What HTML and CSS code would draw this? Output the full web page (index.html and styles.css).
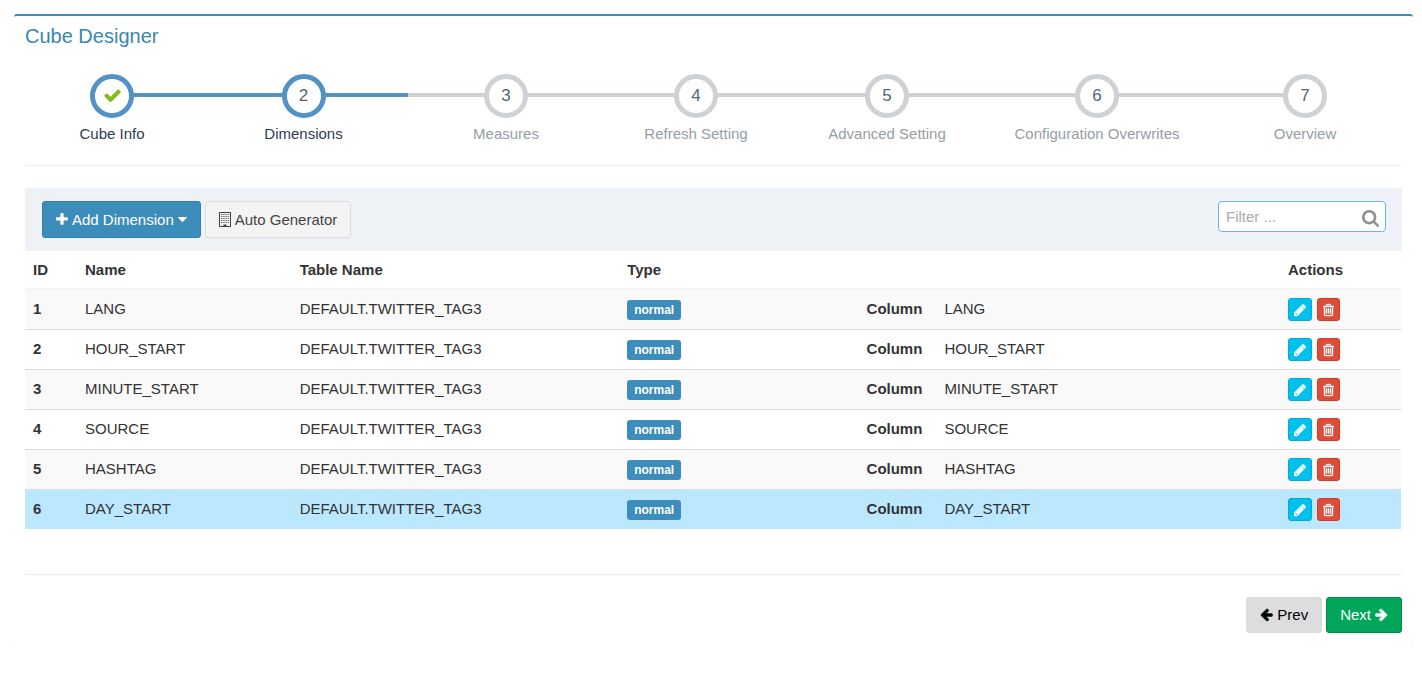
FILE: index.html
```
<!DOCTYPE html>
<html lang="en">
<head>
<meta charset="utf-8">
<title>Cube Designer</title>
<link rel="stylesheet" href="styles.css">
</head>
<body>
<svg class="sprite" aria-hidden="true">
  <symbol id="plus" viewBox="192 0 1408 1792"><path d="M1600 736v192q0 40-28 68t-68 28h-416v416q0 40-28 68t-68 28h-192q-40 0-68-28t-28-68v-416h-416q-40 0-68-28t-28-68v-192q0-40 28-68t68-28h416v-416q0-40 28-68t68-28h192q40 0 68 28t28 68v416h416q40 0 68 28t28 68z"/></symbol>
  <symbol id="caret" viewBox="448 640 896 512"><path d="M1344 704q0 26-19 45l-384 384q-19 19-45 19t-45-19l-384-384q-19-19-19-45t19-45 45-19h768q26 0 45 19t19 45z"/></symbol>
  <symbol id="check" viewBox="0 0 1792 1792"><path d="M1671 566q0 40-28 68l-724 724-136 136q-28 28-68 28t-68-28l-136-136-362-362q-28-28-28-68t28-68l136-136q28-28 68-28t68 28l294 295 656-657q28-28 68-28t68 28l136 136q28 28 28 68z"/></symbol>
  <symbol id="search" viewBox="64 128 1664 1664"><path d="M1216 832q0-185-131.5-316.5t-316.5-131.5-316.5 131.5-131.5 316.5 131.5 316.5 316.5 131.5 316.5-131.5 131.5-316.5zm512 832q0 52-38 90t-90 38q-54 0-90-38l-343-342q-179 124-399 124-143 0-273.5-55.5t-225-150-150-225-55.5-273.5 55.5-273.5 150-225 225-150 273.5-55.5 273.5 55.5 225 150 150 225 55.5 273.5q0 220-124 399l343 343q37 37 37 90z"/></symbol>
  <symbol id="pencil" viewBox="128 0 1536 1792"><path d="M491 1536l91-91-235-235-91 91v107h128v128h107zm523-928q0-22-22-22-10 0-17 7l-542 542q-7 7-7 17 0 22 22 22 10 0 17-7l542-542q7-7 7-17zm-54-192l416 416-832 832h-416v-416zm683 96q0 53-37 90l-166 166-416-416 166-165q36-38 90-38 53 0 91 38l235 234q37 39 37 91z"/></symbol>
  <symbol id="trash" viewBox="192 0 1408 1792"><path d="M704 736v576q0 14-9 23t-23 9h-64q-14 0-23-9t-9-23v-576q0-14 9-23t23-9h64q14 0 23 9t9 23zm256 0v576q0 14-9 23t-23 9h-64q-14 0-23-9t-9-23v-576q0-14 9-23t23-9h64q14 0 23 9t9 23zm256 0v576q0 14-9 23t-23 9h-64q-14 0-23-9t-9-23v-576q0-14 9-23t23-9h64q14 0 23 9t9 23zm128 724v-948h-896v948q0 22 7 40.500t14.500 27 10.500 8.500h832q3 0 10.500-8.500t14.500-27 7-40.500zm-672-1076h448l-48-117q-7-9-17-11h-317q-10 2-17 11zm928 32v64q0 14-9 23t-23 9h-96v948q0 83-47 143.500t-113 60.500h-832q-66 0-113-58.500t-47-141.500v-952h-96q-14 0-23-9t-9-23v-64q0-14 9-23t23-9h309l70-167q15-37 54-63t79-26h320q40 0 79 26t54 63l70 167h309q14 0 23 9t9 23z"/></symbol>
  <symbol id="arrow-left" viewBox="64 0 1664 1792"><path d="M1664 896v128q0 53-32.500 90.500t-84.500 37.500h-704l293 294q38 36 38 90t-38 90l-75 76q-37 37-90 37-52 0-91-37l-651-652q-37-37-37-90 0-52 37-91l651-650q38-38 91-38 52 0 90 38l75 74q38 38 38 91t-38 91l-293 293h704q52 0 84.500 37.500t32.500 90.500z"/></symbol>
  <symbol id="building" viewBox="0 0 12 15"><path fill-rule="evenodd" d="M.5 0h11q.5 0 .5.500v14q0 .5-.5.500h-11q-.5 0-.5-.5v-14q0-.5.5-.5zM1 1v13h3.500v-1.500h3v1.500h3.500v-13z"/><path opacity=".75" d="M2 2h1.500v1h-1.500zm2.200 0h1.500v1h-1.500zm2.200 0h1.500v1h-1.500zm2.200 0h1.500v1h-1.500zM2 4h1.500v1h-1.500zm2.200 0h1.500v1h-1.500zm2.200 0h1.500v1h-1.500zm2.200 0h1.500v1h-1.500zM2 6h1.500v1h-1.500zm2.200 0h1.500v1h-1.500zm2.200 0h1.500v1h-1.500zm2.200 0h1.500v1h-1.500zM2 8h1.500v1h-1.500zm2.200 0h1.500v1h-1.500zm2.200 0h1.500v1h-1.500zm2.200 0h1.500v1h-1.500zM2 10h1.500v1h-1.500zm2.200 0h1.500v1h-1.500zm2.200 0h1.500v1h-1.500zm2.200 0h1.500v1h-1.500z"/></symbol>
</svg>

<main class="box">
  <h1 class="box-title">Cube Designer</h1>

  <ol class="steps">
    <li class="step done"><span class="step-dot"><svg class="icon-check"><use href="#check"/></svg></span><span class="step-label">Cube Info</span></li>
    <li class="step active"><span class="step-dot">2</span><span class="step-label">Dimensions</span></li>
    <li class="step"><span class="step-dot">3</span><span class="step-label">Measures</span></li>
    <li class="step"><span class="step-dot">4</span><span class="step-label">Refresh Setting</span></li>
    <li class="step"><span class="step-dot">5</span><span class="step-label">Advanced Setting</span></li>
    <li class="step"><span class="step-dot">6</span><span class="step-label">Configuration Overwrites</span></li>
    <li class="step"><span class="step-dot">7</span><span class="step-label">Overview</span></li>
  </ol>

  <div class="toolbar">
    <button type="button" class="btn btn-primary"><svg class="icon"><use href="#plus"/></svg>Add Dimension<svg class="icon-caret"><use href="#caret"/></svg></button>
    <button type="button" class="btn btn-default"><svg class="icon"><use href="#building"/></svg>Auto Generator</button>
    <label class="filter"><input type="text" class="filter-input" placeholder="Filter ..." aria-label="Filter"><svg class="icon-search"><use href="#search"/></svg></label>
  </div>

  <table class="dimensions">
    <colgroup><col class="col-id"><col class="col-name"><col class="col-table"><col class="col-type"><col><col class="col-actions"></colgroup>
    <thead>
      <tr><th scope="col">ID</th><th scope="col">Name</th><th scope="col">Table Name</th><th scope="col">Type</th><td></td><th scope="col">Actions</th></tr>
    </thead>
    <tbody>
      <tr><th scope="row">1</th><td>LANG</td><td>DEFAULT.TWITTER_TAG3</td><td><span class="badge">normal</span></td><td><dl class="detail"><dt>Column</dt><dd>LANG</dd></dl></td><td><div class="actions"><button type="button" class="mini edit" aria-label="Edit LANG"><svg><use href="#pencil"/></svg></button><button type="button" class="mini delete" aria-label="Delete LANG"><svg><use href="#trash"/></svg></button></div></td></tr>
      <tr><th scope="row">2</th><td>HOUR_START</td><td>DEFAULT.TWITTER_TAG3</td><td><span class="badge">normal</span></td><td><dl class="detail"><dt>Column</dt><dd>HOUR_START</dd></dl></td><td><div class="actions"><button type="button" class="mini edit" aria-label="Edit HOUR_START"><svg><use href="#pencil"/></svg></button><button type="button" class="mini delete" aria-label="Delete HOUR_START"><svg><use href="#trash"/></svg></button></div></td></tr>
      <tr><th scope="row">3</th><td>MINUTE_START</td><td>DEFAULT.TWITTER_TAG3</td><td><span class="badge">normal</span></td><td><dl class="detail"><dt>Column</dt><dd>MINUTE_START</dd></dl></td><td><div class="actions"><button type="button" class="mini edit" aria-label="Edit MINUTE_START"><svg><use href="#pencil"/></svg></button><button type="button" class="mini delete" aria-label="Delete MINUTE_START"><svg><use href="#trash"/></svg></button></div></td></tr>
      <tr><th scope="row">4</th><td>SOURCE</td><td>DEFAULT.TWITTER_TAG3</td><td><span class="badge">normal</span></td><td><dl class="detail"><dt>Column</dt><dd>SOURCE</dd></dl></td><td><div class="actions"><button type="button" class="mini edit" aria-label="Edit SOURCE"><svg><use href="#pencil"/></svg></button><button type="button" class="mini delete" aria-label="Delete SOURCE"><svg><use href="#trash"/></svg></button></div></td></tr>
      <tr><th scope="row">5</th><td>HASHTAG</td><td>DEFAULT.TWITTER_TAG3</td><td><span class="badge">normal</span></td><td><dl class="detail"><dt>Column</dt><dd>HASHTAG</dd></dl></td><td><div class="actions"><button type="button" class="mini edit" aria-label="Edit HASHTAG"><svg><use href="#pencil"/></svg></button><button type="button" class="mini delete" aria-label="Delete HASHTAG"><svg><use href="#trash"/></svg></button></div></td></tr>
      <tr class="selected"><th scope="row">6</th><td>DAY_START</td><td>DEFAULT.TWITTER_TAG3</td><td><span class="badge">normal</span></td><td><dl class="detail"><dt>Column</dt><dd>DAY_START</dd></dl></td><td><div class="actions"><button type="button" class="mini edit" aria-label="Edit DAY_START"><svg><use href="#pencil"/></svg></button><button type="button" class="mini delete" aria-label="Delete DAY_START"><svg><use href="#trash"/></svg></button></div></td></tr>
    </tbody>
  </table>

  <div class="wizard-nav">
    <button type="button" class="btn btn-prev"><svg class="icon-arrow"><use href="#arrow-left"/></svg>Prev</button>
    <button type="button" class="btn btn-next">Next<svg class="icon-arrow flip"><use href="#arrow-left"/></svg></button>
  </div>
</main>
</body>
</html>
```
FILE: styles.css
```
* { box-sizing: border-box; }

body {
  margin: 14px 9px 14px 14px;
  background: #fff;
  color: #333;
  font: 15px/21px "Liberation Sans", Arial, sans-serif;
}

button, input { font: inherit; }
svg { fill: currentColor; }
.sprite { position: absolute; width: 0; height: 0; }

.box {
  padding: 8px 11px 11px;
  border-top: 2px solid #3c8dbc;
  border-radius: 3px;
  background: #fff;
  box-shadow: 0 1px 1px rgba(0, 0, 0, .12);
}

.box-title {
  margin: 0;
  color: #3a87ad;
  font-size: 20px;
  font-weight: 400;
  line-height: 24px;
}

/* Wizard steps */
.steps {
  display: grid;
  grid-template-columns: 174fr 209fr 196fr 184fr 198fr 222fr 194fr;
  margin: 0 0 22px;
  padding: 26px 0 21px;
  border-bottom: 1px solid #eee;
  list-style: none;
}

.step {
  position: relative;
  display: flex;
  flex-direction: column;
  align-items: center;
  gap: 5px;
  color: #949ea7;
  white-space: nowrap;
}

.step::before {
  content: "";
  position: absolute;
  top: 19px;
  left: 0;
  width: 100%;
  height: 4px;
  background: #ced1d6;
}

.step:first-child::before { left: 50%; width: 50%; }
.step:last-child::before { width: 50%; }
.step.done::before, .step.active::before { background: #5293c4; }
.step.done, .step.active { color: #2b3d53; }

.step-dot {
  position: relative;
  display: flex;
  align-items: center;
  justify-content: center;
  width: 44px;
  height: 44px;
  padding-bottom: 2px;
  border: 5px solid #ced1d6;
  border-radius: 50%;
  background: #fff;
  color: #546474;
  font-size: 17px;
}

.step.done .step-dot, .step.active .step-dot { border-color: #5293c4; }
.icon-check { width: 19px; height: 19px; color: #87ba21; }

/* Toolbar */
.toolbar {
  display: flex;
  align-items: flex-start;
  gap: 4px;
  padding: 13px 16px 13px 17px;
  background: #eef1f6;
}

.btn {
  display: inline-flex;
  align-items: center;
  gap: 4px;
  padding: 7px 13px;
  border: 1px solid transparent;
  border-radius: 3px;
}

.toolbar .btn { height: 37px; }
.btn-primary { background: #3c8dbc; border-color: #367fa9; color: #fff; }
.btn-default { background: #f4f4f4; border-color: #ddd; color: #444; }
.icon { width: 12px; height: 15px; }
.icon-caret { width: 9px; height: 5px; }

.filter {
  display: flex;
  align-items: center;
  width: 168px;
  height: 31px;
  margin-left: auto;
  padding: 0 6px 0 7px;
  border: 1px solid #6fb3e0;
  border-radius: 4px;
  background: #fff;
}

.filter-input {
  flex: 1;
  min-width: 0;
  padding: 0;
  border: 0;
  outline: 0;
  background: none;
}

.filter-input::placeholder { color: #aaa; opacity: 1; }
.icon-search { width: 17px; height: 17px; margin-top: 3px; color: #909090; }

/* Dimension table */
.dimensions {
  width: calc(100% - 1px);
  table-layout: fixed;
  border-collapse: separate;
  border-spacing: 0;
}

.col-id { width: 52px; }
.col-name { width: 15.6%; }
.col-table { width: 23.8%; }
.col-type { width: 17.4%; }
.col-actions { width: 121px; }

.dimensions th, .dimensions td {
  padding: 8px;
  text-align: left;
  vertical-align: top;
}

.dimensions thead th, .dimensions thead td { border-bottom: 2px solid #f4f4f4; }
.dimensions tbody th, .dimensions tbody td { border-bottom: 1px solid #ddd; }
.dimensions tbody tr:nth-child(odd) { background: #f9f9f9; }
.dimensions tbody tr.selected { background: #bbe8ff; }
.dimensions tbody tr.selected > * { border-bottom: 0; }

.badge {
  display: block;
  width: max-content;
  margin-top: 2px;
  padding: 0 7px;
  border-radius: 3px;
  background: #3c8dbc;
  color: #fff;
  font-size: 12px;
  font-weight: 700;
  line-height: 20px;
}

.detail { display: flex; gap: 22px; margin: 0; }
.detail dt { font-weight: 700; }
.detail dd { margin: 0; }

.actions { display: flex; gap: 5px; }

.mini {
  display: flex;
  align-items: center;
  justify-content: center;
  width: 24px;
  height: 23px;
  padding: 0;
  border: 1px solid;
  border-radius: 3px;
}

.mini svg { width: 12px; height: 14px; color: #fff; stroke: currentColor; stroke-width: 50; }
.edit { background: #00c0ef; border-color: #00acd6; }
.delete { width: 23px; background: #dd4b39; border-color: #d73925; }
.delete svg { width: 11px; }

/* Prev / next */
.wizard-nav {
  display: flex;
  justify-content: flex-end;
  gap: 4px;
  margin-top: 45px;
  padding-top: 22px;
  border-top: 1px solid #eee;
}

.wizard-nav .btn { padding: 6px 13px 7px; }
.btn-prev { background: #ddd; color: #000; }
.btn-next { background: #00a65a; border-color: #008d4c; color: #fff; }
.icon-arrow { width: 13px; height: 15px; stroke: currentColor; stroke-width: 60; }
.flip { transform: scaleX(-1); }
```
